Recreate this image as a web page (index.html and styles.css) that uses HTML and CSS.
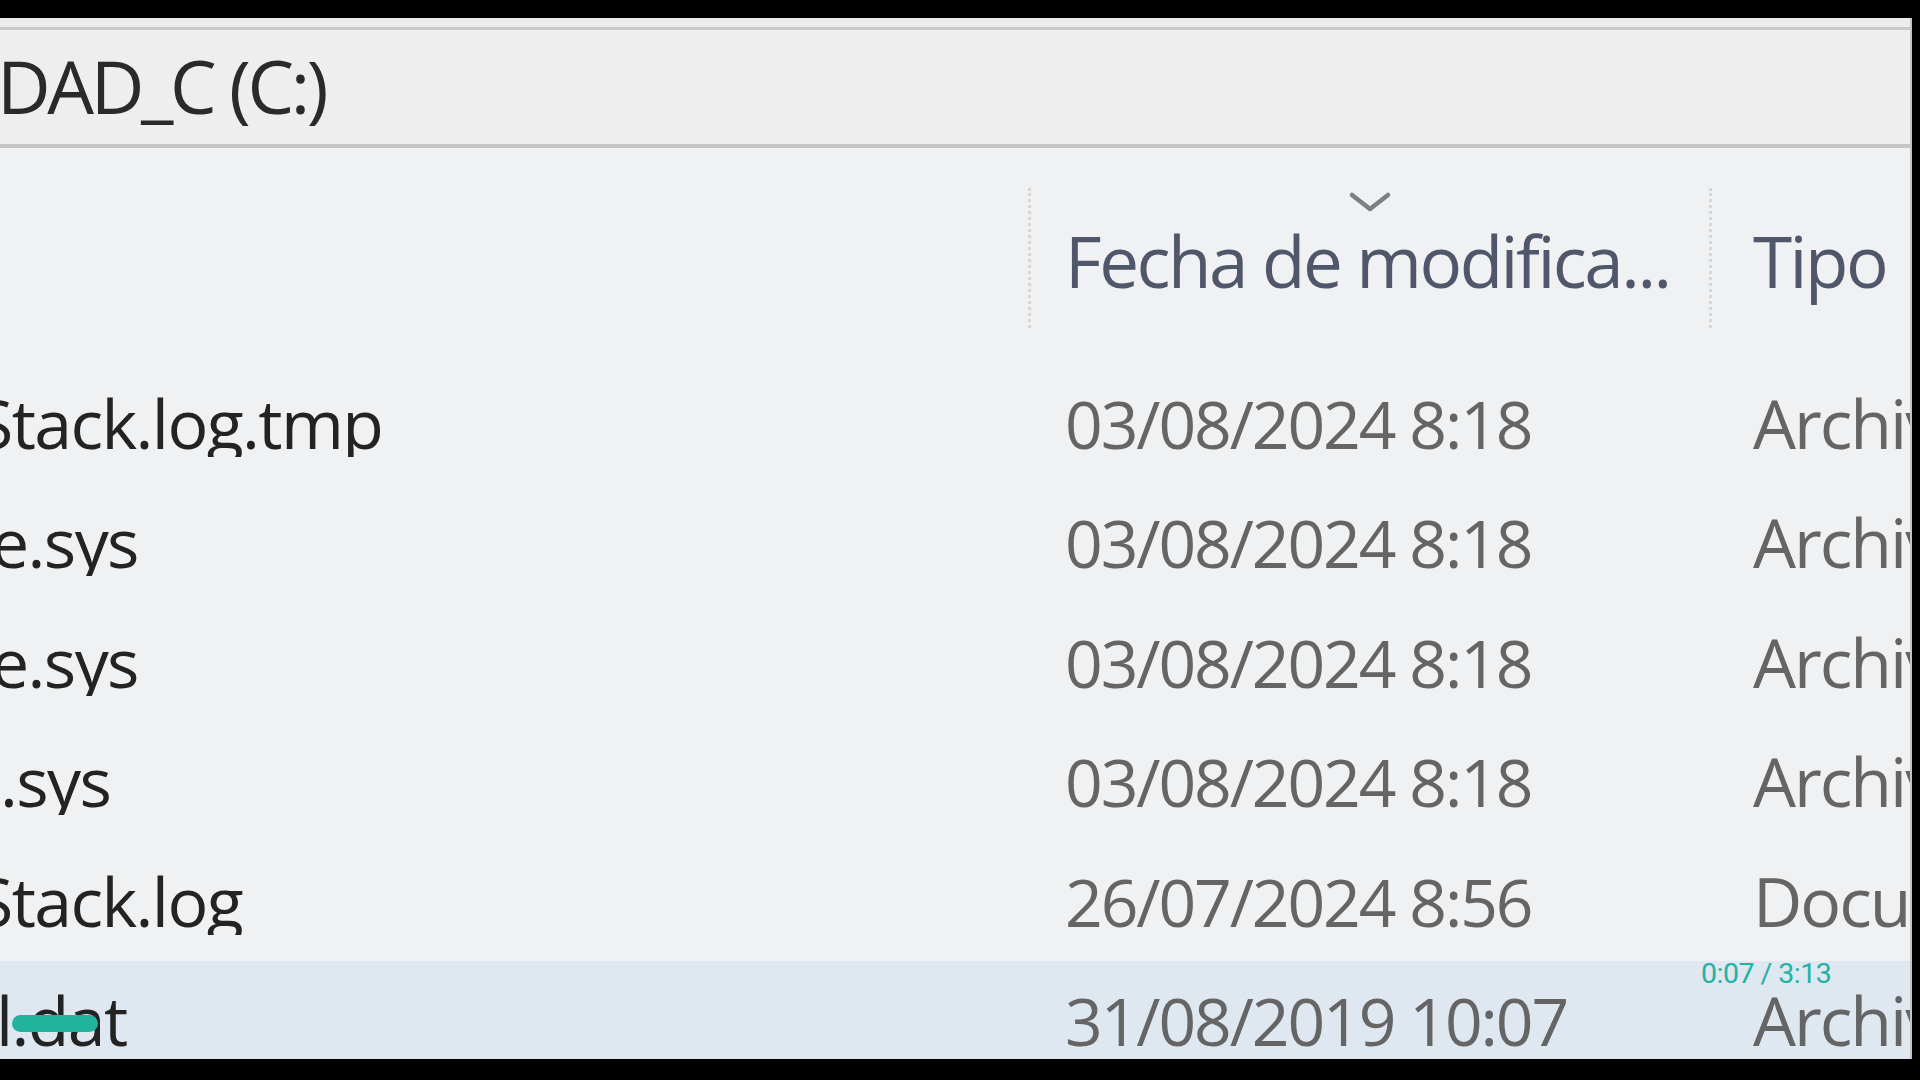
FILE: index.html
```html
<!DOCTYPE html>
<html lang="es">
<head>
<meta charset="utf-8">
<title>UNIDAD_C (C:)</title>
<link rel="stylesheet" href="styles.css">
</head>
<body>
<div class="frame">
  <div class="topstrip"></div>
  <div class="addressbar"><span class="address">DAD_C (C:)</span></div>
  <div class="list">
    <div class="header">
      <div class="hcell hname"></div>
      <div class="hcell hdate">
        <svg class="chevron" width="44" height="22" viewBox="0 0 44 22"><path d="M4 4 L22 18 L40 4" fill="none" stroke="#7c7f86" stroke-width="4.5" stroke-linecap="round" stroke-linejoin="round"/></svg>
        <span class="hlabel">Fecha de modifica...</span>
      </div>
      <div class="hcell htype"><span class="hlabel">Tipo</span></div>
    </div>
    <div class="rows">
      <div class="row"><div class="cell name"><span class="cut">Stack.log.tmp</span></div><div class="cell date">03/08/2024 8:18</div><div class="cell type">Archivo TMP</div></div>
      <div class="row"><div class="cell name"><span class="cut-e">e.sys</span></div><div class="cell date">03/08/2024 8:18</div><div class="cell type">Archivo de sistema</div></div>
      <div class="row"><div class="cell name"><span class="cut-e">e.sys</span></div><div class="cell date">03/08/2024 8:18</div><div class="cell type">Archivo de sistema</div></div>
      <div class="row"><div class="cell name">.sys</div><div class="cell date">03/08/2024 8:18</div><div class="cell type">Archivo de sistema</div></div>
      <div class="row"><div class="cell name"><span class="cut">Stack.log</span></div><div class="cell date">26/07/2024 8:56</div><div class="cell type">Documento de texto</div></div>
      <div class="row selected"><div class="cell name"><span class="cut-l">l.dat</span></div><div class="cell date">31/08/2019 10:07</div><div class="cell type">Archivo DAT</div></div>
    </div>
  </div>
  <div class="progress"></div>
  <div class="time">0:07 / 3:13</div>
</div>
</body>
</html>
```

FILE: styles.css
```css
html, body {
  margin: 0;
  padding: 0;
  background: #000;
  width: 1920px;
  height: 1080px;
  overflow: hidden;
}

.frame {
  position: relative;
  margin-top: 18px;
  width: 1910px;
  height: 1041px;
  border-right: 2px solid #c4c4c4;
  background: #f0f1f2;
  overflow: hidden;
  font-family: "Open Sans", "Noto Sans", sans-serif;
}

.topstrip {
  height: 9px;
  background: #ececec;
}

.addressbar {
  height: 114px;
  border-top: 3px solid #c9c9c9;
  border-bottom: 4px solid #c6c6c6;
  background: #eeeeee;
  display: flex;
  align-items: center;
  overflow: hidden;
}

.address {
  margin-left: -3px;
  font-size: 74px;
  font-weight: 500;
  line-height: 1;
  letter-spacing: -3.4px;
  color: #2a2a2a;
  padding-bottom: 2px;
}

.list {
  padding-top: 40px;
}

.header {
  display: grid;
  grid-template-columns: 1031px 681px 1fr;
  height: 140px;
}

.hcell {
  position: relative;
  display: flex;
  align-items: center;
  box-sizing: border-box;
}

.hname {
  border-right: 3px dotted #d6d6d6;
}

.hdate {
  padding-left: 34px;
  border-right: 3px dotted #d6d6d6;
}

.htype {
  padding-left: 41px;
}

.hlabel {
  font-size: 71px;
  font-weight: 500;
  line-height: 1;
  letter-spacing: -2.5px;
  color: #50576a;
  white-space: nowrap;
  padding-top: 4px;
}

.chevron {
  position: absolute;
  left: 317px;
  top: 3px;
}

.rows {
  margin-top: 35px;
}

.row {
  display: grid;
  grid-template-columns: 1031px 681px 1fr;
  height: 119.5px;
  align-items: center;
  line-height: 1;
  white-space: nowrap;
}

.row.selected {
  background: #dfe7f1;
}

.cell {
  overflow: hidden;
}

.name {
  font-size: 68px;
  font-weight: 500;
  color: #232323;
  letter-spacing: -1.6px;
}

.cut {
  display: inline-block;
  margin-left: -24px;
}

.cut-e {
  display: inline-block;
  margin-left: -9px;
}

.cut-l {
  display: inline-block;
  margin-left: -4px;
}

.date {
  padding-left: 34px;
  font-size: 66px;
  font-weight: 500;
  letter-spacing: -2.1px;
  color: #656565;
}

.type {
  padding-left: 41px;
  font-size: 68px;
  font-weight: 500;
  letter-spacing: -2px;
  color: #656565;
}

.progress {
  position: absolute;
  left: 12px;
  top: 997px;
  width: 86px;
  height: 17px;
  border-radius: 9px;
  background: #20b39e;
}

.time {
  position: absolute;
  left: 1701px;
  top: 942px;
  font-family: Roboto, "Open Sans", sans-serif;
  font-size: 28.5px;
  line-height: 1;
  letter-spacing: -0.5px;
  color: #22b2a3;
}
```
